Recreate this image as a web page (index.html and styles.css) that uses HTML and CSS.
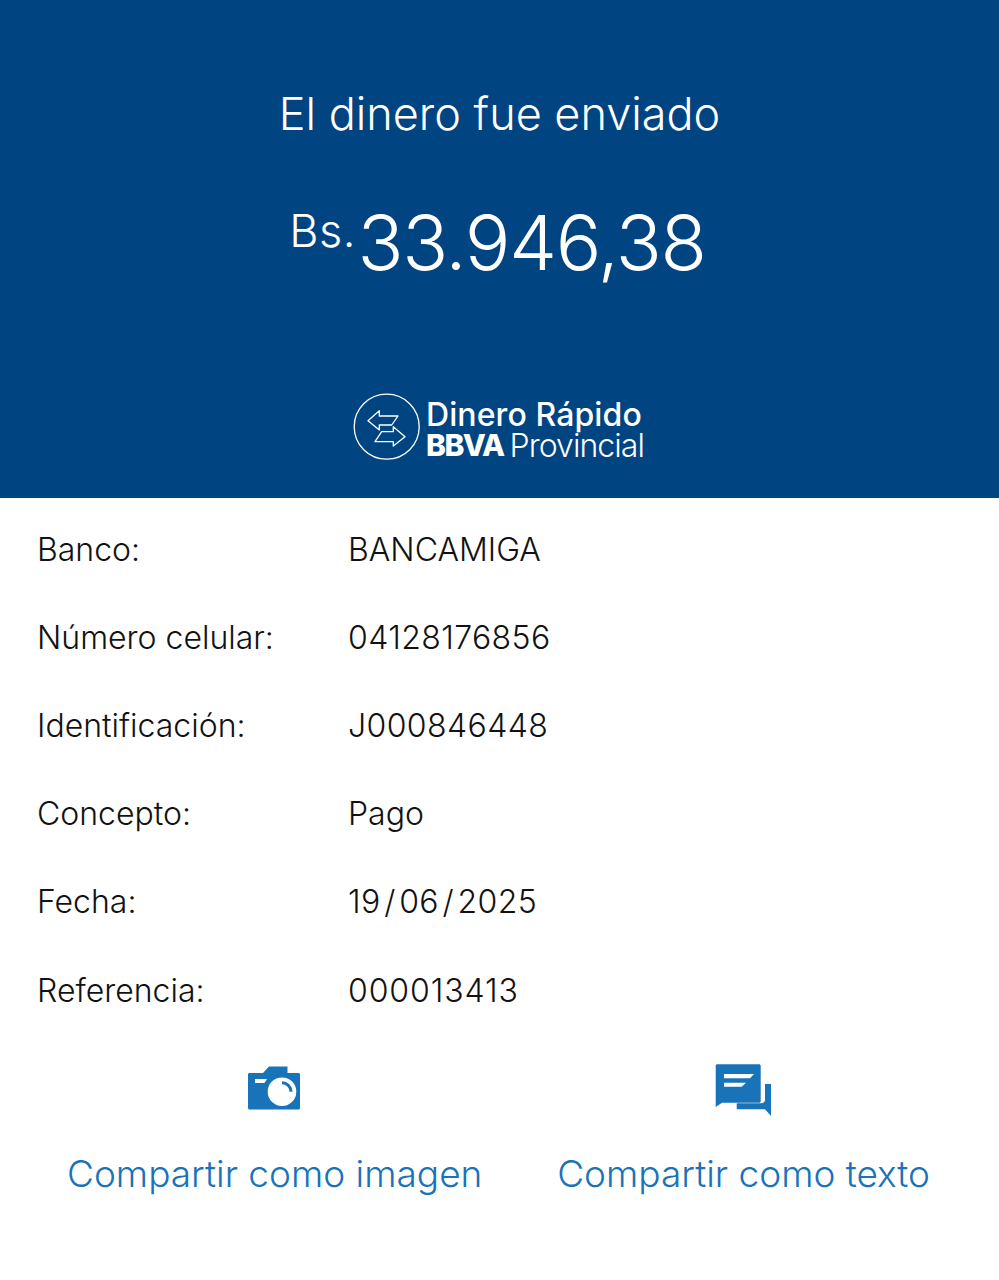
FILE: index.html
```html
<!DOCTYPE html>
<html lang="es">
<head>
<meta charset="utf-8">
<title>Dinero Rápido</title>
<link rel="stylesheet" href="styles.css">
</head>
<body>
<header class="hero">
  <h1 class="hero-title">El dinero fue enviado</h1>
  <div class="amount"><span class="currency">Bs.</span><span class="value">33.946,38</span></div>
  <div class="brand">
    <svg class="brand-icon" width="68" height="68" viewBox="0 0 68 68" fill="none" stroke="#fff" stroke-width="1.3" stroke-linejoin="round">
      <circle cx="33.700" cy="33.700" r="32.500"/>
      <path d="M15 27.700 26.300 17.700V23H45L38.700 32H26.300V37Z"/>
      <path d="M52 43.700 40.300 33.700V38.700H28.700L22 48.700H40.300V53Z"/>
    </svg>
    <div class="brand-text">
      <div class="brand-line1">Dinero Rápido</div>
      <div class="brand-line2"><b>BBVA</b><span class="brand-name">Provincial</span></div>
    </div>
  </div>
</header>
<dl class="details">
  <div class="row"><dt>Banco:</dt><dd>BANCAMIGA</dd></div>
  <div class="row"><dt>Número celular:</dt><dd class="num">04128176856</dd></div>
  <div class="row"><dt>Identificación:</dt><dd class="num">J000846448</dd></div>
  <div class="row"><dt>Concepto:</dt><dd>Pago</dd></div>
  <div class="row"><dt>Fecha:</dt><dd class="num">19<span class="slash">/</span>06<span class="slash">/</span>2025</dd></div>
  <div class="row"><dt>Referencia:</dt><dd class="num num-wide">000013413</dd></div>
</dl>
<div class="actions">
  <div class="action">
    <svg class="action-icon" width="54" height="54" viewBox="0 0 54 54">
      <g transform="translate(0 2)">
        <path fill="#1973b8" d="M0 8.500C0 7.700 .7 7 1.500 7H15L21 .5H39.500V7H50.500C51.300 7 52 7.700 52 8.500V42C52 42.800 51.300 43.500 50.500 43.500H1.500C.7 43.500 0 42.800 0 42Z"/>
        <path fill="#fff" d="M7 13H19L16.500 17H7Z"/>
        <circle cx="34" cy="25.700" r="14.300" fill="#fff"/>
        <path fill="none" stroke="#1973b8" stroke-width="3" d="M34 16.700A9 9 0 0 1 43 25.700"/>
      </g>
    </svg>
    <span class="action-label">Compartir como imagen</span>
  </div>
  <div class="action">
    <svg class="action-icon" width="58" height="54" viewBox="0 0 58 54">
      <path fill="#1973b8" d="M2.200 .3H44.200C45 .3 45.700 1 45.700 1.800V37.200C45.700 38 45 38.700 44.200 38.700H7L.7 43V1.800C.7 1 1.400 .3 2.200 .3Z"/>
      <path fill="#fff" d="M9 10H39L35 14.300H9ZM9 18.700H31L26.700 22.700H9Z"/>
      <path fill="#1973b8" d="M50 20H56V52L50 45.300H23C22 45.300 21.700 44.700 21.700 44V39.300H46C48.500 39.300 50 38 50 35.500Z"/>
    </svg>
    <span class="action-label">Compartir como texto</span>
  </div>
</div>
</body>
</html>
```

FILE: styles.css
```css
* { box-sizing: border-box; }
html, body { margin: 0; padding: 0; }
body {
  width: 999px;
  height: 1280px;
  background: #fff;
  font-family: "Inter", "Liberation Sans", sans-serif;
  overflow: hidden;
}
.hero {
  height: 498px;
  background: #004481;
  color: #fff;
  display: flex;
  flex-direction: column;
  align-items: center;
  padding-top: 86px;
}
.hero-title {
  margin: 0;
  font-size: 45px;
  line-height: 56px;
  font-weight: 300;
}
.amount {
  display: flex;
  align-items: flex-start;
  margin-top: 53px;
  padding-right: 4px;
  height: 84px;
}
.currency {
  font-size: 45px;
  font-weight: 300;
  line-height: 72px;
  letter-spacing: .5px;
  margin-right: 1.500px;
}
.value {
  font-size: 76px;
  font-weight: 300;
  line-height: 94px;
  letter-spacing: -1.280px;
}
.brand {
  display: flex;
  align-items: center;
  margin-top: 114px;
  padding-right: 2px;
  gap: 5px;
}
.brand-text { padding-top: 5px; line-height: 31px; color: #fff; }
.brand-line1 { font-size: 32px; font-weight: 500; letter-spacing: .1px; }
.brand-line2 { display: flex; font-size: 32px; font-weight: 300; }
.brand-line2 b { font-size: 30px; font-weight: 800; letter-spacing: -1.500px; }
.brand-name { margin-left: 6px; letter-spacing: -.95px; }
.details {
  margin: 0;
  padding: 7px 0 0 37px;
}
.row {
  display: flex;
  height: 88.2px;
  align-items: center;
  font-size: 32px;
  font-weight: 300;
  color: #121212;
}
.row dt { width: 311px; }
.row dd { margin: 0; }
.num { letter-spacing: .4px; }
.num-wide { letter-spacing: .9px; }
.slash { margin: 0 3.500px; }
.actions {
  display: flex;
  justify-content: space-between;
  padding: 0 69px 0 67px;
  margin-top: 30px;
}
.action {
  display: flex;
  flex-direction: column;
  align-items: center;
  color: #1973b8;
}
.action-icon { display: block; margin-bottom: 32px; }
.action-label { font-size: 37px; line-height: 48px; font-weight: 300; }
```
